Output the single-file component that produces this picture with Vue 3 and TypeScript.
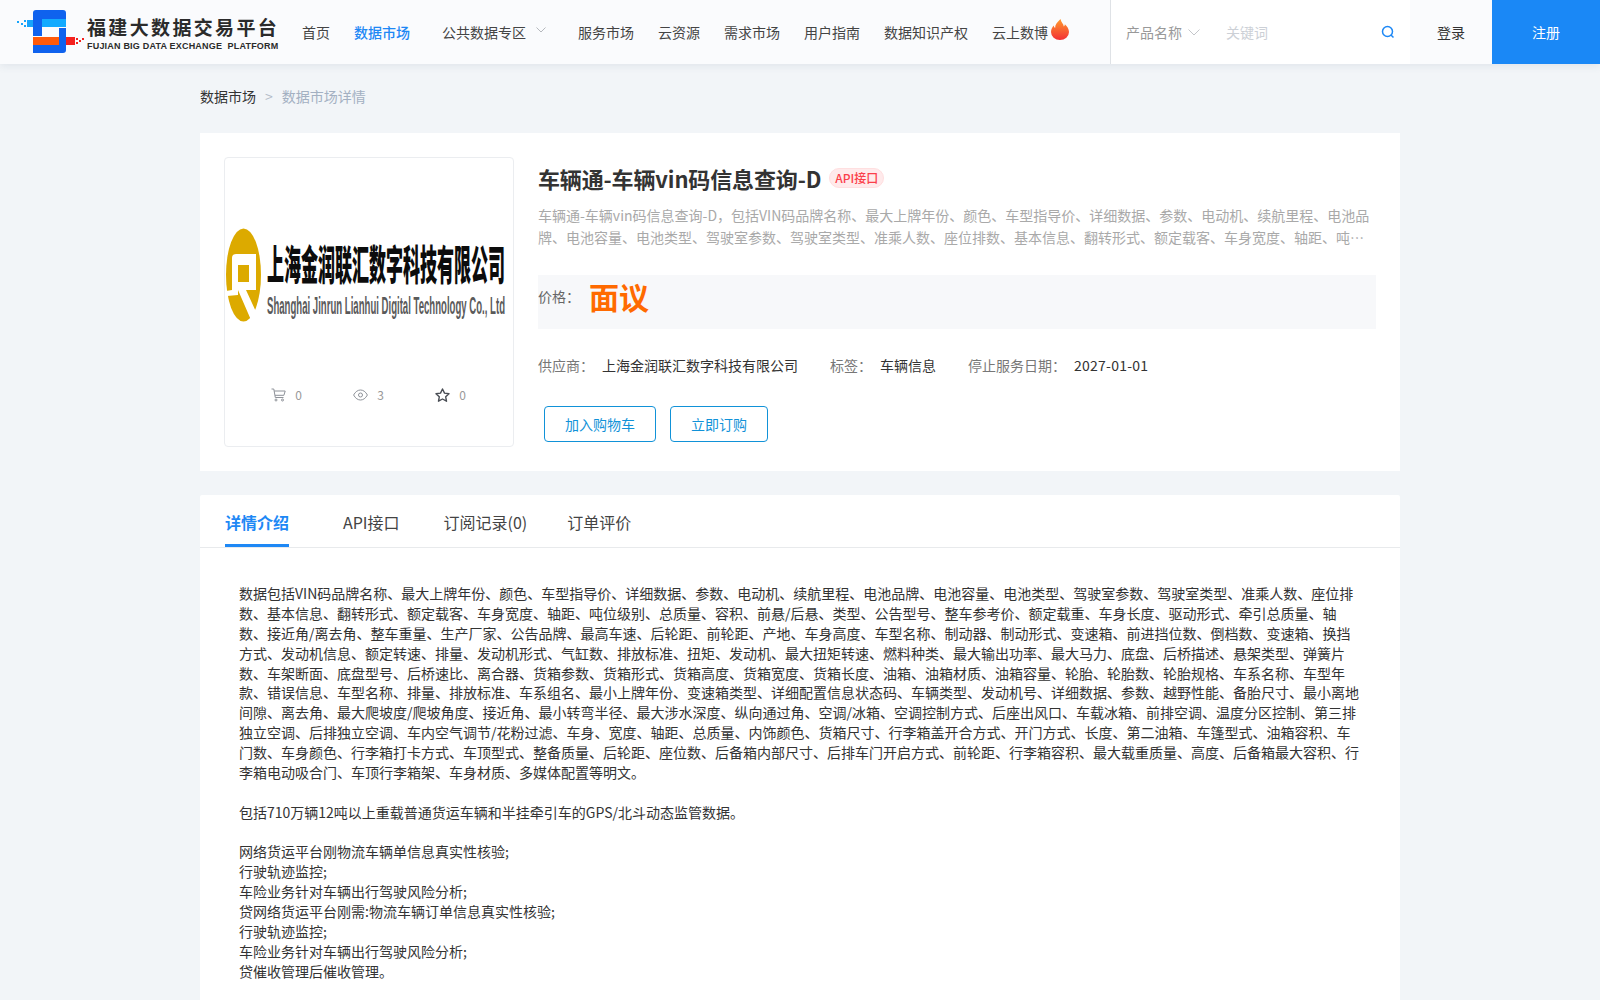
<script setup lang="ts">
const navItems = ['服务市场', '云资源', '需求市场', '用户指南', '数据知识产权']
const tabs = [
  { label: '详情介绍', cls: 'tab-a active' },
  { label: 'API接口', cls: 'tab-b' },
  { label: '订阅记录(0)', cls: 'tab-c' },
  { label: '订单评价', cls: 'tab-d' }
]
const intro = '数据包括VIN码品牌名称、最大上牌年份、颜色、车型指导价、详细数据、参数、电动机、续航里程、电池品牌、电池容量、电池类型、驾驶室参数、驾驶室类型、准乘人数、座位排数、基本信息、翻转形式、额定载客、车身宽度、轴距、吨位级别、总质量、容积、前悬/后悬、类型、公告型号、整车参考价、额定载重、车身长度、驱动形式、牵引总质量、轴数、接近角/离去角、整车重量、生产厂家、公告品牌、最高车速、后轮距、前轮距、产地、车身高度、车型名称、制动器、制动形式、变速箱、前进挡位数、倒档数、变速箱、换挡方式、发动机信息、额定转速、排量、发动机形式、气缸数、排放标准、扭矩、发动机、最大扭矩转速、燃料种类、最大输出功率、最大马力、底盘、后桥描述、悬架类型、弹簧片数、车架断面、底盘型号、后桥速比、离合器、货箱参数、货箱形式、货箱高度、货箱宽度、货箱长度、油箱、油箱材质、油箱容量、轮胎、轮胎数、轮胎规格、车系名称、车型年款、错误信息、车型名称、排量、排放标准、车系组名、最小上牌年份、变速箱类型、详细配置信息状态码、车辆类型、发动机号、详细数据、参数、越野性能、备胎尺寸、最小离地间隙、离去角、最大爬坡度/爬坡角度、接近角、最小转弯半径、最大涉水深度、纵向通过角、空调/冰箱、空调控制方式、后座出风口、车载冰箱、前排空调、温度分区控制、第三排独立空调、后排独立空调、车内空气调节/花粉过滤、车身、宽度、轴距、总质量、内饰颜色、货箱尺寸、行李箱盖开合方式、开门方式、长度、第二油箱、车篷型式、油箱容积、车门数、车身颜色、行李箱打卡方式、车顶型式、整备质量、后轮距、座位数、后备箱内部尺寸、后排车门开启方式、前轮距、行李箱容积、最大载重质量、高度、后备箱最大容积、行李箱电动吸合门、车顶行李箱架、车身材质、多媒体配置等明文。'
const summary = '车辆通-车辆vin码信息查询-D，包括VIN码品牌名称、最大上牌年份、颜色、车型指导价、详细数据、参数、电动机、续航里程、电池品牌、电池容量、电池类型、驾驶室参数、驾驶室类型、准乘人数、座位排数、基本信息、翻转形式、额定载客、车身宽度、轴距、吨位级别、总质量、容积、前悬/后悬、类型、公告型号'
const second = '包括710万辆12吨以上重载普通货运车辆和半挂牵引车的GPS/北斗动态监管数据。'
const lines = [
  '网络货运平台刚物流车辆单信息真实性核验;',
  '行驶轨迹监控;',
  '车险业务针对车辆出行驾驶风险分析;',
  '贷网络货运平台刚需:物流车辆订单信息真实性核验;',
  '行驶轨迹监控;',
  '车险业务针对车辆出行驾驶风险分析;',
  '贷催收管理后催收管理。'
]
</script>

<template>
  <div class="page">
    <header class="header">
      <div class="brand">
        <svg class="brand-mark" width="72" height="64" viewBox="14 0 72 64">
          <path d="M36 10h27a3 3 0 0 1 3 3v6H42v17h-9V13a3 3 0 0 1 3-3z" fill="#0f62ee" />
          <rect x="42" y="19" width="24" height="8" fill="#12aaff" />
          <path d="M59 28h7v22a3 3 0 0 1-3 3H33v-8h26z" fill="#0f62ee" />
          <rect x="33" y="37" width="26" height="8" fill="#ff5a0a" />
          <rect x="66" y="37" width="9" height="8" fill="#f4211e" />
          <rect x="27" y="20" width="6" height="7" fill="#17a4fb" />
          <g fill="#17a4fb">
            <rect x="17" y="21" width="2" height="2" /><rect x="21" y="23" width="2" height="2" /><rect x="24" y="20" width="2" height="2" /><rect x="24" y="25" width="2" height="2" />
          </g>
          <g fill="#f4211e">
            <rect x="76" y="38" width="2" height="2" /><rect x="76" y="42" width="2" height="2" /><rect x="79" y="40" width="2" height="2" /><rect x="82" y="38" width="2" height="2" />
          </g>
        </svg>
        <div class="brand-text">
          <div class="brand-cn">福建大数据交易平台</div>
          <div class="brand-en">FUJIAN BIG DATA EXCHANGE&nbsp; PLATFORM</div>
        </div>
      </div>

      <nav class="nav">
        <span>首页</span>
        <span class="nav-active">数据市场</span>
        <span class="nav-drop">
          公共数据专区
          <svg width="10" height="6" viewBox="0 0 10 6"><path d="M.5.5 5 5 9.500.5" fill="none" stroke="#b5b8bd" /></svg>
        </span>
        <span v-for="item in navItems" :key="item">{{ item }}</span>
        <span class="nav-hot">
          云上数博
          <svg width="18" height="21" viewBox="0 0 18 21">
            <defs>
              <linearGradient id="flame" x1="0" y1="0" x2="0" y2="1">
                <stop offset="0" stop-color="#ff9a2e" />
                <stop offset="1" stop-color="#f22f35" />
              </linearGradient>
            </defs>
            <path d="M9.500 0c.6 3.500 3 4.600 3.300 7.500.8-.5 1-1.400 1-2.300C16.300 7.400 18 10 18 13a9 8 0 0 1-18 0c0-3 1.500-4.700 2.700-6.500.2 1.200.6 2 1.400 2.500C4 5.500 6.500 3 9.500 0z" fill="url(#flame)" />
          </svg>
        </span>
      </nav>

      <div class="search">
        <div class="search-type">
          <span>产品名称</span>
          <svg width="12" height="7" viewBox="0 0 12 7"><path d="M.5.5 6 6 11.500.5" fill="none" stroke="#c4c6ca" /></svg>
        </div>
        <div class="search-input">
          <span>关键词</span>
          <svg width="14" height="14" viewBox="0 0 14 14"><circle cx="6.500" cy="6.500" r="5" fill="none" stroke="#1e88f5" stroke-width="1.500" /><path d="m10 10 2.500 2.500" stroke="#1e88f5" stroke-width="1.500" /></svg>
        </div>
      </div>
      <div class="login">登录</div>
      <div class="register">注册</div>
    </header>

    <main class="main">
      <div class="crumbs">
        <span class="crumb-home">数据市场</span>
        <span class="crumb-sep">&gt;</span>
        <span class="crumb-now">数据市场详情</span>
      </div>

      <section class="product">
        <div class="cover">
          <svg class="cover-img" width="288" height="110" viewBox="225 222 288 110">
            <ellipse cx="243.500" cy="275" rx="17.500" ry="46.500" fill="#dcaa00" />
            <path d="M236 254H256V290H246L258 316L251 320L238 290V295L227 296L226 291L232 290V258Q232 254 236 254Z" fill="#fff" />
            <rect x="238" y="265" width="11" height="17" fill="#dcaa00" />
            <text x="267" y="280" class="logo-cn" textLength="238" lengthAdjust="spacingAndGlyphs">上海金润联汇数字科技有限公司</text>
            <text x="267" y="314" class="logo-en" textLength="238" lengthAdjust="spacingAndGlyphs">Shanghai Jinrun Lianhui Digital Technology Co., Ltd</text>
          </svg>
          <div class="stats">
            <span class="stat">
              <svg width="15" height="14" viewBox="0 0 15 14" fill="none" stroke="#8e9299"><path d="M.5 1h2.300l1.500 8.500h8.200M3.200 3h11l-1.300 4.300H4" /><circle cx="5" cy="12" r="1" /><circle cx="11.500" cy="12" r="1" /></svg>
              <span>0</span>
            </span>
            <span class="stat">
              <svg width="15" height="12" viewBox="0 0 15 12" fill="none" stroke="#8e9299"><path d="M.6 6C2.500 2.500 5 1 7.500 1s5 1.500 6.900 5c-1.900 3.500-4.400 5-6.900 5S2.500 9.500.6 6z" /><circle cx="7.500" cy="6" r="2" /></svg>
              <span>3</span>
            </span>
            <span class="stat">
              <svg width="15" height="14" viewBox="0 0 15 14" fill="none" stroke="#4a4e55" stroke-width="1.400" stroke-linejoin="round"><path d="m7.500 1 2 4.100 4.500.6-3.300 3.100.8 4.400-4-2.200-4 2.200.8-4.400L1 5.700l4.500-.6z" /></svg>
              <span>0</span>
            </span>
          </div>
        </div>

        <div class="info">
          <div class="title-row">
            <h1 class="title">车辆通-车辆vin码信息查询-D</h1>
            <span class="badge">API接口</span>
          </div>
          <p class="summary">{{ summary }}</p>
          <div class="price-row">
            <span class="price-label">价格：</span>
            <span class="price-value">面议</span>
          </div>
          <div class="meta">
            <span class="meta-label">供应商：</span><span class="meta-value">上海金润联汇数字科技有限公司</span>
            <span class="meta-label">标签：</span><span class="meta-value">车辆信息</span>
            <span class="meta-label">停止服务日期：</span><span class="meta-value meta-date">2027-01-01</span>
          </div>
          <div class="actions">
            <button class="btn btn-cart">加入购物车</button>
            <button class="btn btn-buy">立即订购</button>
          </div>
        </div>
      </section>

      <section class="detail">
        <div class="tabs">
          <span v-for="tab in tabs" :key="tab.label" class="tab" :class="tab.cls">{{ tab.label }}</span>
        </div>
        <div class="content">
          <p>{{ intro }}</p>
          <p>{{ second }}</p>
          <p>
            <template v-for="line in lines" :key="line">{{ line }}<br /></template>
          </p>
        </div>
      </section>
    </main>
  </div>
</template>

<style>
body {
  background: #f2f5f8;
}
</style>

<style scoped>
.page {
  min-height: 1000px;
  background: #f2f5f8;
  font-family: "Noto Sans CJK SC", "Noto Sans", sans-serif;
  font-size: 14px;
  color: #333;
}
.header {
  display: flex;
  align-items: stretch;
  height: 64px;
  background: #fafbfd;
  box-shadow: 0 2px 8px rgba(70, 90, 120, 0.1);
  position: relative;
}
.brand {
  display: flex;
  align-items: stretch;
  width: 302px;
  flex: none;
}
.brand-mark {
  margin-left: 14px;
  margin-right: 1px;
  flex: none;
}
.brand-text {
  display: flex;
  flex-direction: column;
  padding-top: 13px;
  min-width: 0;
}
.brand-cn {
  font-size: 19px;
  font-weight: 700;
  letter-spacing: 2.35px;
  line-height: 28px;
  color: #2b2b2b;
  white-space: nowrap;
}
.brand-en {
  font-family: "Liberation Sans", sans-serif;
  font-size: 9px;
  font-weight: 700;
  letter-spacing: 0.2px;
  line-height: 11px;
  color: #2b2b2b;
  white-space: nowrap;
}
.nav {
  flex: 1;
  display: flex;
  align-items: center;
  gap: 24px;
  color: #444;
  white-space: nowrap;
}
.nav-active {
  color: #1e88f5;
  font-weight: 500;
  margin-right: 8px;
}
.nav-drop {
  display: flex;
  align-items: center;
  gap: 10px;
  margin-right: 8px;
}
.nav-drop svg {
  margin-top: -4px;
}
.nav-hot {
  display: flex;
  align-items: center;
}
.nav-hot svg {
  margin-top: -6px;
  margin-left: 3px;
}
.search {
  width: 300px;
  flex: none;
  display: flex;
  background: #fff;
  border-left: 1px solid #dfe2e6;
  box-sizing: border-box;
}
.search-type {
  width: 100px;
  padding-left: 15px;
  display: flex;
  align-items: center;
  gap: 6px;
  color: #999;
  flex: none;
  box-sizing: border-box;
}
.search-input {
  flex: 1;
  display: flex;
  align-items: center;
  justify-content: space-between;
  padding: 0 15px 0 15px;
  color: #ccd0d6;
}
.login {
  width: 82px;
  flex: none;
  display: flex;
  align-items: center;
  justify-content: center;
  color: #333;
}
.register {
  width: 108px;
  flex: none;
  display: flex;
  align-items: center;
  justify-content: center;
  background: #1a88f6;
  color: #fff;
}
.main {
  width: 1200px;
  margin: 0 auto;
}
.crumbs {
  height: 69px;
  display: flex;
  align-items: center;
  gap: 9px;
  padding-bottom: 6px;
  box-sizing: border-box;
}
.crumb-home {
  color: #333;
}
.crumb-sep {
  color: #b4bcc8;
}
.crumb-now {
  color: #a3b0c2;
}
.product {
  display: flex;
  gap: 24px;
  padding: 24px;
  background: #fff;
  height: 338px;
  box-sizing: border-box;
}
.cover {
  width: 290px;
  height: 290px;
  flex: none;
  box-sizing: border-box;
  border: 1px solid #ebedf0;
  border-radius: 4px;
  overflow: hidden;
}
.cover-img {
  display: block;
  margin-top: 64px;
  margin-left: 0;
}
.logo-cn {
  font-family: "Noto Sans CJK SC", sans-serif;
  font-size: 41px;
  font-weight: 900;
  fill: #0c0c0c;
}
.logo-en {
  font-family: "Liberation Sans", sans-serif;
  font-size: 24px;
  font-weight: 700;
  fill: #5a5a5a;
}
.stats {
  display: flex;
  justify-content: center;
  margin-top: 55px;
  margin-left: -1px;
}
.stat {
  width: 82px;
  display: flex;
  align-items: center;
  justify-content: center;
  gap: 9px;
  font-size: 12px;
  color: #999;
  line-height: 16px;
}
.info {
  flex: 1;
  min-width: 0;
}
.title-row {
  display: flex;
  align-items: center;
  gap: 8px;
  height: 32px;
  margin-top: 5px;
}
.title {
  margin: 0;
  font-size: 22px;
  font-weight: 700;
  letter-spacing: -0.14px;
  line-height: 32px;
  color: #333;
  white-space: nowrap;
}
.badge {
  box-sizing: border-box;
  height: 20px;
  padding: 0 5px;
  border-radius: 10px;
  background: #ffeaeb;
  border: 1px solid #ffdfe0;
  color: #fb3f4a;
  font-size: 12px;
  font-weight: 500;
  line-height: 18px;
}
.summary {
  margin: 11px 0 0;
  font-size: 14px;
  line-height: 21.5px;
  color: #a9a9a9;
  display: -webkit-box;
  -webkit-box-orient: vertical;
  -webkit-line-clamp: 2;
  line-clamp: 2;
  overflow: hidden;
}
.price-row {
  display: flex;
  align-items: flex-start;
  height: 54px;
  margin-top: 27px;
  background: #f7f8fa;
}
.price-label {
  width: 51px;
  flex: none;
  line-height: 20px;
  margin-top: 11px;
  color: #666;
}
.price-value {
  font-size: 30px;
  font-weight: 700;
  line-height: 43px;
  color: #ff6a00;
}
.meta {
  display: flex;
  align-items: center;
  margin-top: 26px;
  line-height: 20px;
}
.meta-label {
  color: #777;
  margin-right: 8px;
}
.meta-value {
  color: #333;
  margin-right: 32px;
}
.meta-date {
  letter-spacing: 0.25px;
}
.actions {
  display: flex;
  gap: 14px;
  margin-top: 31px;
  margin-left: 6px;
}
.btn {
  box-sizing: border-box;
  height: 36px;
  background: #fff;
  border: 1px solid #1192d8;
  border-radius: 4px;
  color: #1192d8;
  font: inherit;
  padding: 0;
}
.btn-cart {
  width: 112px;
}
.btn-buy {
  width: 98px;
}
.detail {
  margin-top: 24px;
  background: #fff;
  border-radius: 2px 2px 0 0;
}
.tabs {
  display: flex;
  height: 53px;
  box-sizing: border-box;
  border-bottom: 1px solid #e8eaec;
  padding-left: 25px;
}
.tab {
  font-size: 16px;
  line-height: 54px;
  height: 52px;
  color: #444;
  box-sizing: border-box;
  white-space: nowrap;
}
.tab-b {
  margin-left: 54px;
}
.tab-c {
  margin-left: 44px;
}
.tab-d {
  margin-left: 40px;
}
.active {
  color: #1e88f5;
  font-weight: 700;
  border-bottom: 3px solid #1e88f5;
}
.content {
  padding: 36px 41px 40px 39px;
  font-size: 14px;
  line-height: 19.88px;
  color: #333;
}
.content p {
  margin: 0 0 19.88px;
}
</style>
